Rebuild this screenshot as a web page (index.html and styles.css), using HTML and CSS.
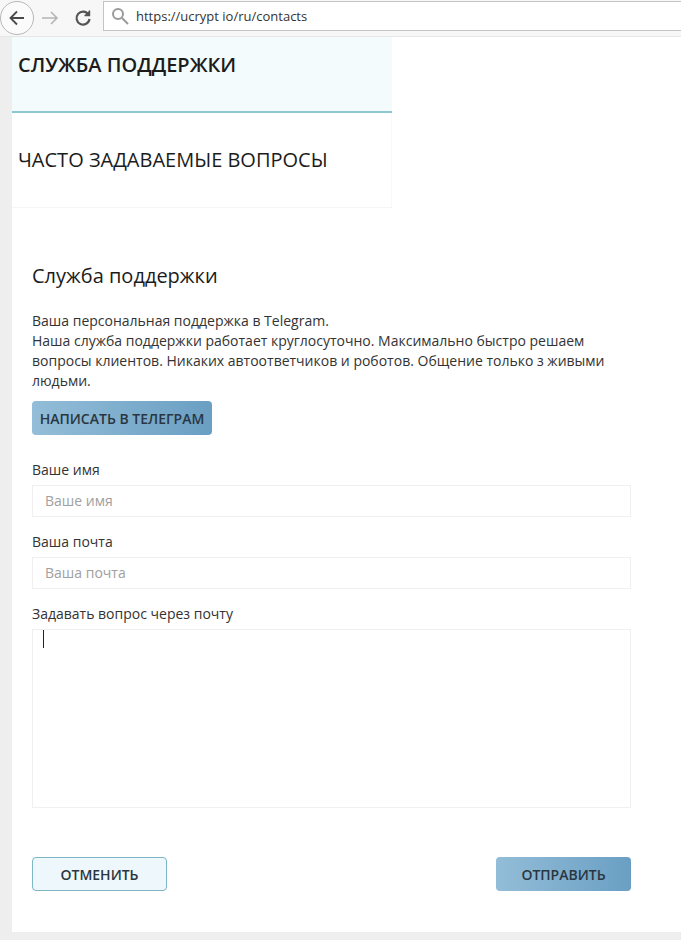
FILE: index.html
```html
<!DOCTYPE html>
<html lang="ru">
<head>
  <meta charset="UTF-8" />
  <meta name="viewport" content="width=device-width, initial-scale=1.0">
  <title>Служба поддержки</title>
  <link rel="stylesheet" href="styles.css">
</head>
<body>
  <div class="browser-bar">
    <button class="nav-back">
      <svg width="20" height="20" viewBox="0 0 20 20" fill="none" stroke="#4a4a4a" stroke-width="1.8">
        <path d="M17 10H3.5M10 3.5L3.5 10l6.5 6.5"/>
      </svg>
    </button>
    <svg class="nav-forward" width="20" height="20" viewBox="0 0 20 20" fill="none" stroke="#b5b5b5" stroke-width="1.6">
      <path d="M2 10h15M11 4l6 6-6 6"/>
    </svg>
    <svg class="nav-reload" width="20" height="20" viewBox="0 0 20 20" fill="none" stroke="#555" stroke-width="2.2">
      <path d="M15.5 6.5A6.5 6.5 0 1 0 16.5 11"/>
      <path d="M16.5 2.5v5h-5" stroke-width="1.4" fill="#555"/>
    </svg>
    <div class="url-box">
      <svg width="18" height="18" viewBox="0 0 18 18" fill="none" stroke="#9a9a9a" stroke-width="2">
        <circle cx="7" cy="7" r="5"/>
        <path d="M11 11l6 6"/>
      </svg>
      <span>https://ucrypt io/ru/contacts</span>
    </div>
  </div>

  <div class="page">
    <div class="tabs">
      <div class="tab tab-active">СЛУЖБА ПОДДЕРЖКИ</div>
      <div class="tab">ЧАСТО ЗАДАВАЕМЫЕ ВОПРОСЫ</div>
    </div>

    <div class="content">
      <h2>Служба поддержки</h2>
      <p class="intro">Ваша персональная поддержка в Telegram.<br>Наша служба поддержки работает круглосуточно. Максимально быстро решаем вопросы клиентов. Никаких автоответчиков и роботов. Общение только з живыми людьми.</p>
      <a class="btn btn-blue btn-telegram">НАПИСАТЬ В ТЕЛЕГРАМ</a>

      <label class="field-label">Ваше имя</label>
      <input class="field" type="text" placeholder="Ваше имя">

      <label class="field-label">Ваша почта</label>
      <input class="field" type="text" placeholder="Ваша почта">

      <label class="field-label">Задавать вопрос через почту</label>
      <div class="field-area"><span class="caret"></span></div>

      <div class="actions">
        <a class="btn btn-light">ОТМЕНИТЬ</a>
        <a class="btn btn-blue">ОТПРАВИТЬ</a>
      </div>
    </div>
  </div>
</body>
</html>
```

FILE: styles.css
```css
html, body {
  margin: 0;
  padding: 0;
}

body {
  width: 681px;
  height: 940px;
  overflow: hidden;
  background-color: #eeeeee;
  font-family: "Open Sans", "Noto Sans", sans-serif;
  color: #222;
}

.browser-bar {
  height: 37px;
  box-sizing: border-box;
  display: flex;
  align-items: center;
  background-color: #f7f7f7;
  border-bottom: 1px solid #e6e6e6;
}

.nav-back {
  width: 34px;
  height: 34px;
  margin-left: 0;
  padding: 0;
  border: 1px solid #b8b8b8;
  border-radius: 50%;
  background-color: #fbfbfb;
  display: flex;
  align-items: center;
  justify-content: center;
}

.nav-forward {
  margin-left: 6px;
}

.nav-reload {
  margin-left: 13px;
}

.url-box {
  flex: 1;
  height: 30px;
  box-sizing: border-box;
  margin-left: 10px;
  margin-bottom: 4px;
  padding-left: 7px;
  display: flex;
  align-items: center;
  gap: 7px;
  background-color: white;
  border: 1px solid #c4c4c4;
  border-right: none;
  font-size: 13px;
  color: #333;
}

.page {
  margin-left: 12px;
  height: 895px;
  background-color: white;
}

.tabs {
  width: 380px;
  border-bottom: 1px solid #f5f5f5;
}

.tab {
  height: 94px;
  box-sizing: border-box;
  padding: 33px 0 0 6px;
  font-size: 20px;
  line-height: 28px;
  color: #1c1c1c;
  border-right: 1px solid #f8f8f8;
}

.tab-active {
  height: 76px;
  padding-top: 14px;
  background-color: #f4fbfd;
  border-right: none;
  border-bottom: 2px solid #8cc8d2;
  font-weight: 600;
}

.content {
  padding: 54px 50px 0 20px;
}

h2 {
  margin: 0 0 21px;
  font-size: 20px;
  font-weight: 400;
  line-height: 28px;
  color: #1c1c1c;
}

.intro {
  margin: 0 0 2px;
  font-size: 14px;
  line-height: 20px;
  color: #333;
}

.btn {
  display: inline-flex;
  align-items: center;
  justify-content: center;
  box-sizing: border-box;
  height: 34px;
  width: 135px;
  border-radius: 4px;
  font-size: 14px;
  font-weight: 600;
  color: #2a3640;
}

.btn-blue {
  background: linear-gradient(to right, #93bdd8, #6a9fc3);
}

.btn-telegram {
  width: 180px;
  margin-top: 8px;
  margin-bottom: 25px;
}

.btn-light {
  background-color: #eef7fb;
  border: 1px solid #7db6c4;
}

.field-label {
  display: block;
  font-size: 14px;
  line-height: 20px;
  margin-bottom: 5px;
  color: #333;
}

.field {
  display: block;
  width: 100%;
  height: 32px;
  box-sizing: border-box;
  padding: 0 12px 2px;
  margin-bottom: 15px;
  border: 1px solid #f0f0f0;
  font-family: inherit;
  font-size: 14px;
  outline: none;
}

.field::placeholder {
  color: #a0a0a0;
  opacity: 1;
}

.field-area {
  height: 179px;
  box-sizing: border-box;
  border: 1px solid #f0f0f0;
  padding: 0 0 0 10px;
}

.caret {
  display: block;
  width: 1px;
  height: 18px;
  background-color: #222;
}

.actions {
  display: flex;
  justify-content: space-between;
  margin-top: 49px;
}
```
